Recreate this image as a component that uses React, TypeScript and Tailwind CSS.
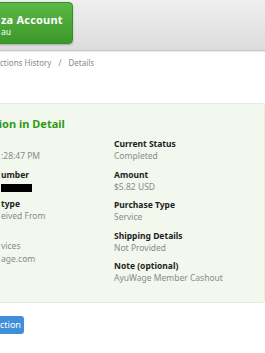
import React from 'react';

const Field: React.FC<{ label: string; children?: React.ReactNode }> = ({ label, children }) => (
  <div className="mb-[5px]">
    <div className="h-[13px] leading-[13px] font-bold text-[#222] text-[8.5px] whitespace-nowrap">{label}</div>
    <div className="leading-[12.5px] text-[#8a8a8a] text-[8.5px] whitespace-nowrap">{children}</div>
  </div>
);

export default function App() {
  return (
    <div className="w-[265px] h-[353px] overflow-hidden bg-white font-['Noto_Sans',sans-serif]">
      {/* top bar */}
      <div className="h-[51px] bg-gradient-to-b from-[#efefef] to-[#dcdcdc] border-b border-[#c6c6c6] shadow-[0_1px_0_#ececec] pt-[2px]">
        <div className="-ml-[20px] w-[93px] h-[42px] rounded-[4px] border border-[#3b8a2b] bg-gradient-to-b from-[#5bb846] to-[#3b982a] shadow-[0_1px_2px_rgba(0,0,0,0.25)] pl-[20px] pt-[10px] text-white">
          <div className="text-[11px] leading-[13px] font-bold tracking-[0.2px] whitespace-nowrap">za Account</div>
          <div className="text-[8.5px] leading-[11px] whitespace-nowrap">au</div>
        </div>
      </div>

      {/* breadcrumb */}
      <div className="mt-[5px] h-[13px] leading-[13px] text-[8px] text-[#8a8a8a] whitespace-nowrap flex gap-[7px]">
        <span>ctions History</span>
        <span>/</span>
        <span>Details</span>
      </div>

      {/* panel */}
      <div className="mt-[34px] -ml-[60px] w-[325px] bg-[#f2f8ee] border border-[#e2ecdc] rounded-[3px] pl-[60px] pt-[13px] pb-[12px]">
        <div className="-ml-[49px] h-[14px] leading-[14px] text-[11px] font-bold text-[#2f9a16] whitespace-nowrap">
          Transaction in Detail
        </div>
        <div className="mt-[6px] flex">
          <div className="w-[113px]">
            <Field label="">:28:47 PM</Field>
            <Field label="umber">
              <div className="mt-[3px] h-[8px] w-[31px] bg-black" />
            </Field>
            <Field label="type">eived From</Field>
            <Field label="">
              <div className="leading-[12.5px]">vices</div>
              <div className="leading-[11px]">age.com</div>
            </Field>
          </div>
          <div>
            <Field label="Current Status">Completed</Field>
            <Field label="Amount">$5.82 USD</Field>
            <Field label="Purchase Type">Service</Field>
            <Field label="Shipping Details">Not Provided</Field>
            <Field label="Note (optional)">AyuWage Member Cashout</Field>
          </div>
        </div>
      </div>

      {/* action button */}
      <div className="mt-[13px] -ml-[40px] w-[64px] h-[18px] rounded-[3px] bg-[#3f8fdb] text-white text-[9px] leading-[18px] pl-[40px] whitespace-nowrap">
        ction
      </div>
    </div>
  );
}
